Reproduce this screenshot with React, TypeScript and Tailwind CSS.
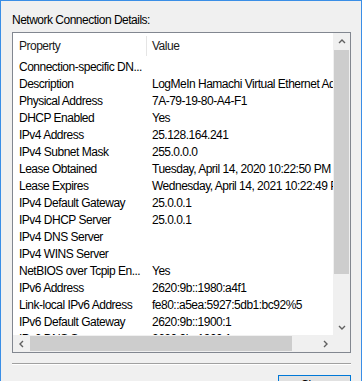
import React from 'react'

const rows: [string, string][] = [
  ['Connection-specific DN...', ''],
  ['Description', 'LogMeIn Hamachi Virtual Ethernet Adapter'],
  ['Physical Address', '7A-79-19-80-A4-F1'],
  ['DHCP Enabled', 'Yes'],
  ['IPv4 Address', '25.128.164.241'],
  ['IPv4 Subnet Mask', '255.0.0.0'],
  ['Lease Obtained', 'Tuesday, April 14, 2020 10:22:50 PM'],
  ['Lease Expires', 'Wednesday, April 14, 2021 10:22:49 PM'],
  ['IPv4 Default Gateway', '25.0.0.1'],
  ['IPv4 DHCP Server', '25.0.0.1'],
  ['IPv4 DNS Server', ''],
  ['IPv4 WINS Server', ''],
  ['NetBIOS over Tcpip En...', 'Yes'],
  ['IPv6 Address', '2620:9b::1980:a4f1'],
  ['Link-local IPv6 Address', 'fe80::a5ea:5927:5db1:bc92%5'],
  ['IPv6 Default Gateway', '2620:9b::1900:1'],
  ['IPv6 DNS Server', '2620:9b::1900:1'],
]

function Arrow({ dir }: { dir: 'up' | 'down' | 'left' | 'right' }) {
  const d = {
    up: 'M2 6 L5 3 L8 6',
    down: 'M2 4 L5 7 L8 4',
    left: 'M6 2 L3 5 L6 8',
    right: 'M4 2 L7 5 L4 8',
  }[dir]
  return (
    <svg width="10" height="10" viewBox="0 0 10 10">
      <path d={d} fill="none" stroke="#606060" strokeWidth="1.4" />
    </svg>
  )
}

export default function App() {
  return (
    <div
      className="flex h-[381px] w-[362px] flex-col overflow-hidden border-l border-r border-t border-[#3a8ee6] bg-[#f0f0f0] pl-[11px] pr-[10px] pt-[11px] text-[12px] tracking-[-0.5px] text-black"
      style={{ fontFamily: '"Liberation Sans", Arial, sans-serif' }}
    >
      <div className="h-[16px] shrink-0 leading-[16px]">Network Connection Details:</div>
      <div className="mt-[4px] grid h-[321px] shrink-0 grid-cols-[1fr_17px] grid-rows-[1fr_17px] overflow-hidden border border-[#828790] bg-white">
        <div className="min-h-0 overflow-hidden whitespace-nowrap">
          <div className="flex h-[25px] items-center text-[#1a1a1a]">
            <div className="w-[133px] shrink-0 pl-[6px]">Property</div>
            <div className="h-[20px] w-px bg-[#e5e5e5]" />
            <div className="pl-[5px]">Value</div>
          </div>
          {rows.map(([k, v]) => (
            <div key={k} className="flex h-[17px] items-center">
              <div className="w-[133px] shrink-0 overflow-hidden pl-[6px]">{k}</div>
              <div className="pl-[6px]">{v}</div>
            </div>
          ))}
        </div>
        <div className="flex flex-col bg-[#f0f0f0]">
          <div className="flex h-[17px] items-center justify-center">
            <Arrow dir="up" />
          </div>
          <div className="mx-[1px] h-[224px] bg-[#cdcdcd]" />
          <div className="flex-1" />
          <div className="flex h-[17px] items-center justify-center">
            <Arrow dir="down" />
          </div>
        </div>
        <div className="flex bg-[#f0f0f0]">
          <div className="flex w-[17px] items-center justify-center">
            <Arrow dir="left" />
          </div>
          <div className="my-[1px] w-[262px] bg-[#cdcdcd]" />
          <div className="flex-1" />
          <div className="flex w-[17px] items-center justify-center">
            <Arrow dir="right" />
          </div>
        </div>
        <div className="bg-[#f0f0f0]" />
      </div>
      <div className="mt-[10px] h-px shrink-0 bg-[#a0a0a0]" />
      <div className="h-px shrink-0 bg-white" />
      <div className="mt-[10px] flex shrink-0 justify-end">
        <div className="flex h-[23px] w-[73px] items-start justify-center border border-[#0078d7] bg-[#e1e1e1] pt-[1px] leading-[16px]">
          Close
        </div>
      </div>
    </div>
  )
}
